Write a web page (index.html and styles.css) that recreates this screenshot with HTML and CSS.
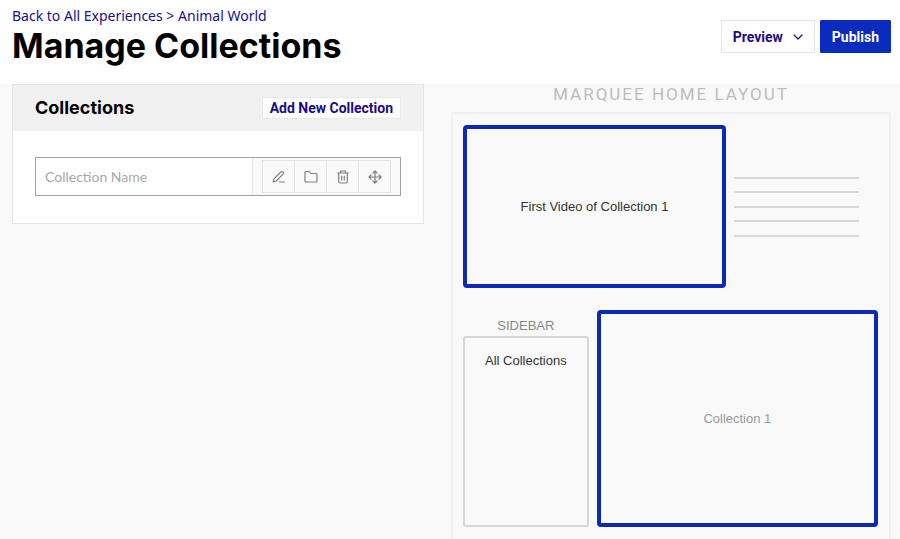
FILE: index.html
```html
<!DOCTYPE html>
<html lang="en">
<head>
    <meta charset="UTF-8">
    <meta name="viewport" content="width=device-width, initial-scale=1.0">
    <title>Manage Collections</title>
    <link rel="stylesheet" href="styles.css">
</head>
<body>
    <header class="page-header">
        <div>
            <nav class="breadcrumb">
                <a href="#">Back to All Experiences</a> &gt; <a href="#">Animal World</a>
            </nav>
            <h1>Manage Collections</h1>
        </div>
        <div class="header-actions">
            <button type="button" class="btn btn-preview">
                Preview
                <svg width="10" height="6" viewBox="0 0 10 6" aria-hidden="true"><path d="M1 1l4 4 4-4"/></svg>
            </button>
            <button type="button" class="btn btn-publish">Publish</button>
        </div>
    </header>

    <main class="content">
        <!-- Collections list -->
        <section class="panel">
            <div class="panel-header">
                <h2>Collections</h2>
                <button type="button" class="btn-add">Add New Collection</button>
            </div>
            <div class="panel-body">
                <div class="collection-row">
                    <input type="text" class="collection-name" placeholder="Collection Name" aria-label="Collection Name">
                    <div class="row-actions">
                        <button type="button" class="icon-btn" aria-label="Edit">
                            <svg viewBox="0 0 16 16"><path d="M2.200 12.800l.8-3 6.800-6.800a1.500 1.500 0 0 1 2.200 2.200l-6.800 6.800zM8.500 13h5"/></svg>
                        </button>
                        <button type="button" class="icon-btn" aria-label="Folder">
                            <svg viewBox="0 0 16 16"><path d="M2 3.500q0-1 1-1h3.200l1.600 2H13q1 0 1 1V12q0 1-1 1H3q-1 0-1-1z"/></svg>
                        </button>
                        <button type="button" class="icon-btn" aria-label="Delete">
                            <svg viewBox="0 0 16 16"><path d="M2.500 4h11M5.500 4V2h5v2M3.700 4v8.500q0 1.500 1.500 1.500h5.600q1.500 0 1.500-1.500V4M6.700 7v4M9.300 7v4"/></svg>
                        </button>
                        <button type="button" class="icon-btn" aria-label="Move">
                            <svg viewBox="0 0 16 16"><path d="M8 2v12M2 8h12M6 4l2-2 2 2M6 12l2 2 2-2M4 6L2 8l2 2M12 6l2 2-2 2"/></svg>
                        </button>
                    </div>
                </div>
            </div>
        </section>

        <!-- Layout preview -->
        <section class="layout">
            <h3>MARQUEE HOME LAYOUT</h3>
            <div class="layout-frame">
                <div class="marquee">
                    <div class="slot marquee-video">First Video of Collection 1</div>
                    <div class="text-lines">
                        <span></span>
                        <span></span>
                        <span></span>
                        <span></span>
                        <span></span>
                    </div>
                </div>
                <div class="lower">
                    <div class="sidebar">
                        <div class="sidebar-label">SIDEBAR</div>
                        <div class="sidebar-box">All Collections</div>
                    </div>
                    <div class="slot slot-collection">Collection 1</div>
                </div>
            </div>
        </section>
    </main>
</body>
</html>
```

FILE: styles.css
```css
* {
    box-sizing: border-box;
}

body {
    margin: 0;
    min-height: 100vh;
    display: flex;
    flex-direction: column;
    background-color: #f9f9f9;
    font-family: Inter, "Liberation Sans", sans-serif;
    color: #000;
}

h1, h2, h3 {
    margin: 0;
}

button {
    font-family: Roboto, "Liberation Sans", sans-serif;
    font-weight: 700;
    font-size: 14px;
    cursor: pointer;
}

svg {
    fill: none;
    stroke: currentColor;
    stroke-width: 1.2;
    stroke-linecap: round;
    stroke-linejoin: round;
}

/* Header */
.page-header {
    display: flex;
    justify-content: space-between;
    align-items: flex-start;
    height: 84px;
    padding: 6px 9px 0 12px;
    background-color: #fff;
}

.breadcrumb {
    font-family: "Noto Sans", sans-serif;
    font-size: 14px;
    line-height: 19px;
    color: #1c0f8a;
}

.breadcrumb a {
    color: inherit;
    text-decoration: none;
}

h1 {
    font-size: 34px;
    line-height: 41px;
}

.header-actions {
    display: flex;
    gap: 5px;
    margin-top: 14px;
}

.btn {
    display: flex;
    align-items: center;
    height: 33px;
    padding: 0 11px;
    border: 1px solid #e4e4e4;
    border-radius: 1px;
}

.btn-preview {
    gap: 10px;
    background-color: #fff;
    color: #1c0a8a;
}

.btn-publish {
    background-color: #0a2bbd;
    border-color: #0a2bbd;
    color: #fff;
}

/* Two columns under the header */
.content {
    flex: 1;
    display: grid;
    grid-template-columns: 412fr 440fr;
    gap: 27px;
    padding: 0 9px 0 12px;
}

/* Collections panel */
.panel {
    align-self: start;
    border: 1px solid #e4e4e4;
    background-color: #fff;
}

.panel-header {
    display: flex;
    justify-content: space-between;
    align-items: center;
    height: 46px;
    padding: 0 22px;
    background-color: #f1f1f1;
}

h2 {
    font-size: 18px;
    line-height: 24px;
}

.btn-add {
    height: 22px;
    padding: 0 7px;
    border: 1px solid #e8e8e8;
    background-color: #fff;
    color: #1c0a8a;
}

.panel-body {
    padding: 26px 22px 27px;
}

.collection-row {
    display: flex;
    height: 39px;
    border: 1px solid #a2a2a2;
}

.collection-name {
    flex: 1;
    min-width: 0;
    padding: 0 9px;
    border: 0;
    background: none;
    font-family: Lato, sans-serif;
    font-size: 14px;
    color: #333;
}

.collection-name::placeholder {
    color: #a8a8a8;
}

.row-actions {
    display: flex;
    padding: 2px 9px;
    border-left: 1px solid #e8e8e8;
    background-color: #f9f9f9;
}

.icon-btn {
    display: flex;
    align-items: center;
    justify-content: center;
    width: 33px;
    padding: 0;
    border: 1px solid #e4e4e4;
    background-color: #fafafa;
    color: #808080;
}

.icon-btn + .icon-btn {
    margin-left: -1px;
}

.icon-btn svg {
    width: 16px;
    height: 16px;
}

/* Layout preview */
.layout {
    display: flex;
    flex-direction: column;
    font-family: "Liberation Sans", Arial, sans-serif;
    font-size: 13px;
    line-height: 16px;
}

h3 {
    font-family: Roboto, "Liberation Sans", sans-serif;
    font-size: 17px;
    font-weight: 400;
    line-height: 20px;
    letter-spacing: 2px;
    text-align: center;
    color: #bdbdbd;
    margin-bottom: 8px;
}

.layout-frame {
    flex: 1;
    padding: 11px 11px 10px 10px;
    border: 2px solid #f0f0f0;
    border-bottom: 0;
}

.slot {
    display: flex;
    align-items: center;
    justify-content: center;
    border: 4px solid #0c28b8;
    border-radius: 4px;
}

.marquee {
    display: grid;
    grid-template-columns: 263fr 125fr 11fr;
    align-items: center;
    column-gap: 8px;
}

.marquee-video {
    height: 163px;
    color: #333;
}

.text-lines {
    display: flex;
    flex-direction: column;
    justify-content: space-between;
    height: 60px;
}

.text-lines span {
    height: 2px;
    background-color: #d8d8d8;
}

.lower {
    display: grid;
    grid-template-columns: 126fr 282fr;
    gap: 8px;
    margin-top: 22px;
}

.sidebar {
    display: flex;
    flex-direction: column;
    padding-top: 8px;
    text-align: center;
}

.sidebar-label {
    margin-bottom: 2px;
    color: #888;
}

.sidebar-box {
    flex: 1;
    padding-top: 15px;
    border: 2px solid #d6d6d6;
    border-radius: 3px;
    color: #333;
}

.slot-collection {
    height: 217px;
    color: #999;
}
```
